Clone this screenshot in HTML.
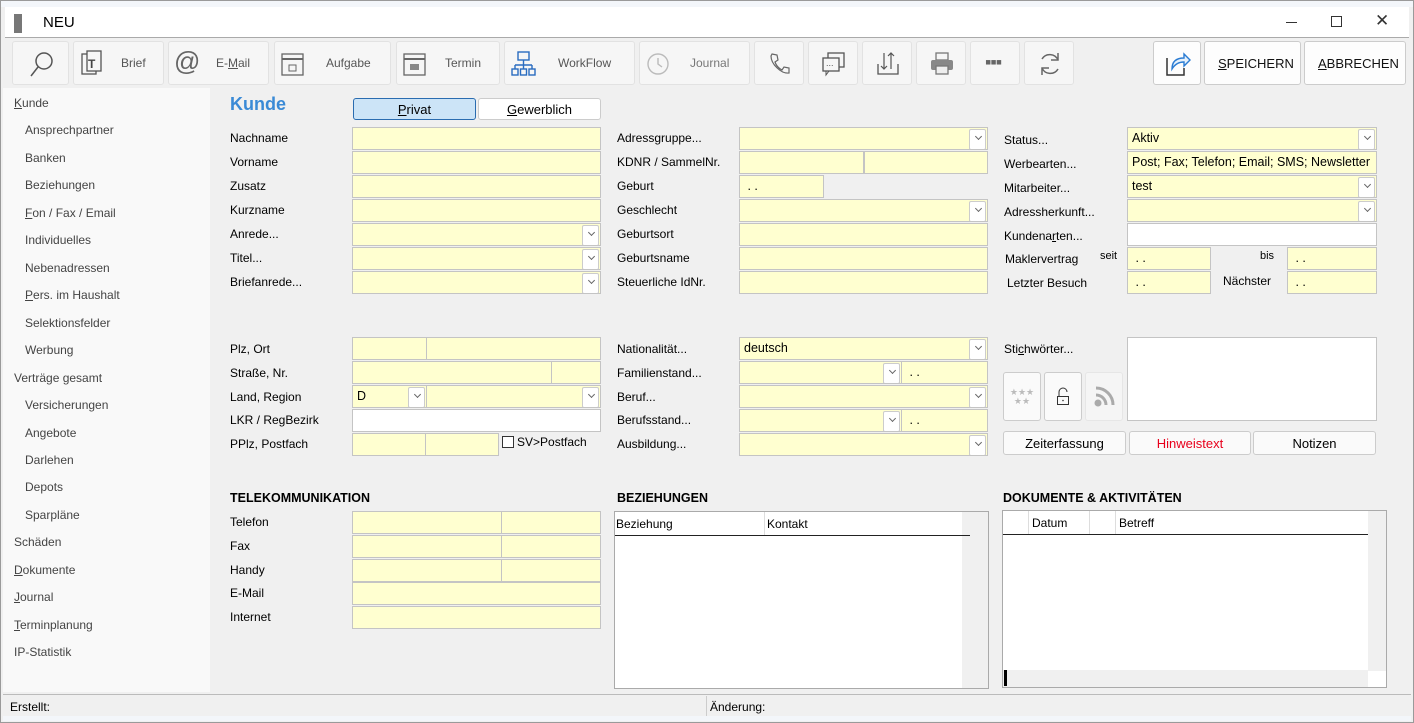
<!DOCTYPE html>
<html><head><meta charset="utf-8"><style>
*{box-sizing:border-box;margin:0;padding:0}
body{width:1414px;height:723px;background:#f0f0f0;font-family:"Liberation Sans",sans-serif;font-size:12px;color:#000;position:relative;overflow:hidden}
.a{position:absolute}
.f{position:absolute;height:23px;background:#ffffd0;border:1px solid #c4c4c4;padding:3px 4px;font-size:12.5px;white-space:nowrap;overflow:hidden}
.w{background:#fff}
.dd::after{content:"";position:absolute;right:1px;top:1px;width:15px;height:19px;background:#fff;border:1px solid #ccc;border-radius:2px}
.dd::before{content:"";position:absolute;right:6px;top:6px;width:4px;height:4px;border-right:1px solid #666;border-bottom:1px solid #666;transform:rotate(45deg);z-index:2}
.l{position:absolute;font-size:12px;white-space:nowrap}
.tb{position:absolute;top:41px;height:44px;background:#f6f6f6;border:1px solid #e2e2e2;border-radius:3px;color:#555;font-size:12px}
.tb span{position:absolute;top:14px}
.tb svg{position:absolute}
.nav{position:absolute;left:14px;font-size:12px;color:#444}
.nav.i{left:25px}
.btn{position:absolute;background:#fafafa;border:1px solid #ccc;border-radius:3px;text-align:center;font-size:13px}
h3{position:absolute;font-size:12.5px;font-weight:bold}
</style></head><body>
<!-- title bar -->
<div class="a" style="left:0;top:0;width:1414px;height:723px;border:1px solid #9a9a9a"></div>
<div class="a" style="left:1px;top:1px;width:1412px;height:6px;background:#f3f6fa"></div>
<div class="a" style="left:5px;top:7px;width:1404px;height:31px;background:#fff;border-bottom:1px solid #aaa"></div>
<div class="a" style="left:14px;top:14px;width:8px;height:19px;background:#777"></div>
<div class="l" style="left:43px;top:14px;font-size:15px">NEU</div>
<div class="a" style="left:1286px;top:22px;width:11px;height:1px;background:#333"></div>
<div class="a" style="left:1331px;top:16px;width:11px;height:11px;border:1px solid #333"></div>
<div class="l" style="left:1375px;top:11px;font-size:17px;color:#333">✕</div>
<!-- toolbar -->
<div class="tb" style="left:12px;width:57px"><svg style="left:16px;top:8px" width="26" height="28" viewBox="0 0 26 28"><circle cx="15" cy="11" r="8" fill="none" stroke="#555" stroke-width="1.5"/><line x1="9" y1="17" x2="2" y2="26" stroke="#555" stroke-width="1.5"/></svg></div>
<div class="tb" style="left:73px;width:91px"><svg style="left:6px;top:8px" width="24" height="28"><rect x="2" y="4" width="14" height="20" fill="none" stroke="#555" stroke-width="1.3"/><rect x="7" y="1" width="14" height="20" fill="#f6f6f6" stroke="#555" stroke-width="1.3"/><text x="8" y="18" font-size="12" font-weight="bold" fill="#444" font-family="Liberation Sans">T</text></svg><span style="left:47px">Brief</span></div>
<div class="tb" style="left:168px;width:101px"><span style="left:5px;top:4px;font-size:26px;color:#666">@</span><span style="left:47px">E-<u>M</u>ail</span></div>
<div class="tb" style="left:274px;width:117px"><svg style="left:5px;top:9px" width="26" height="26"><rect x="2" y="3" width="21" height="21" fill="none" stroke="#666" stroke-width="1.3"/><line x1="2" y1="8" x2="23" y2="8" stroke="#666" stroke-width="2"/><rect x="9" y="14" width="7" height="6" fill="none" stroke="#666"/></svg><span style="left:51px">Aufgabe</span></div>
<div class="tb" style="left:396px;width:104px"><svg style="left:5px;top:9px" width="26" height="26"><rect x="2" y="3" width="21" height="21" fill="none" stroke="#666" stroke-width="1.3"/><line x1="2" y1="8" x2="23" y2="8" stroke="#666" stroke-width="2"/><rect x="8" y="13" width="9" height="6" fill="#888"/></svg><span style="left:48px">Termin</span></div>
<div class="tb" style="left:504px;width:131px"><svg style="left:6px;top:8px" width="26" height="28"><g fill="none" stroke="#2a6cc0" stroke-width="1.4"><rect x="7" y="2" width="11" height="8"/><line x1="12.5" y1="10" x2="12.5" y2="15"/><line x1="4" y1="15" x2="21" y2="15"/><line x1="4" y1="15" x2="4" y2="19"/><line x1="12.5" y1="15" x2="12.5" y2="19"/><line x1="21" y1="15" x2="21" y2="19"/><rect x="1" y="19" width="6" height="6"/><rect x="9.5" y="19" width="6" height="6"/><rect x="18" y="19" width="6" height="6"/></g></svg><span style="left:53px">WorkFlow</span></div>
<div class="tb" style="left:639px;width:111px"><svg style="left:5px;top:9px" width="26" height="26"><circle cx="13" cy="13" r="10" fill="none" stroke="#bbb" stroke-width="1.4"/><path d="M13 7v6l4 3" fill="none" stroke="#bbb" stroke-width="1.4"/></svg><span style="left:50px;color:#777">Journal</span></div>
<div class="tb" style="left:754px;width:50px"><svg style="left:12px;top:9px" width="26" height="26"><path d="M5 3l5 1 1 5-3 2c1 3 3 6 7 8l2-3 5 1 0 5c-8 1-18-9-18-17z" fill="none" stroke="#666" stroke-width="1.2"/></svg></div>
<div class="tb" style="left:808px;width:50px"><svg style="left:12px;top:9px" width="26" height="26"><rect x="7" y="2" width="16" height="14" fill="none" stroke="#555" stroke-width="1.3"/><rect x="2" y="7" width="16" height="13" fill="#f6f6f6" stroke="#555" stroke-width="1.3"/><path d="M5 20v4l3-4" fill="none" stroke="#555"/><text x="5" y="15" font-size="9" fill="#555">...</text></svg></div>
<div class="tb" style="left:862px;width:50px"><svg style="left:12px;top:8px" width="26" height="28"><path d="M3 14v10h20V14" fill="none" stroke="#555" stroke-width="1.3"/><path d="M9 3v16M6 16l3 3 3-3M16 19V3M13 6l3-3 3 3" fill="none" stroke="#555" stroke-width="1.2"/></svg></div>
<div class="tb" style="left:916px;width:50px"><svg style="left:12px;top:9px" width="26" height="26"><rect x="7" y="2" width="12" height="7" fill="none" stroke="#777" stroke-width="1.3"/><rect x="2" y="9" width="22" height="10" rx="2" fill="#888"/><rect x="7" y="15" width="12" height="8" fill="#eee" stroke="#777" stroke-width="1.3"/></svg></div>
<div class="tb" style="left:970px;width:50px"><span style="left:14px;top:10px;font-size:18px;color:#666;letter-spacing:-1px">▪▪▪</span></div>
<div class="tb" style="left:1024px;width:50px"><svg style="left:11px;top:8px" width="28" height="28"><path d="M22 10A9 9 0 0 0 6 9M6 18a9 9 0 0 0 16 1" fill="none" stroke="#666" stroke-width="1.5"/><path d="M22 3v7h-7M6 25v-7h7" fill="none" stroke="#666" stroke-width="1.5"/></svg></div>
<div class="tb" style="left:1153px;width:48px;background:#fdfdfd;border-color:#ccc"><svg style="left:10px;top:8px" width="28" height="28"><path d="M3 8v17h17V18" fill="none" stroke="#333" stroke-width="1.5"/><path d="M8 19c0-8 5-11 12-11V4l6 6-6 6v-4c-5 0-9 2-12 7z" fill="#e6f1fb" stroke="#2b7cd3" stroke-width="1.4"/></svg></div>
<div class="tb" style="left:1204px;width:97px;background:#fdfdfd;border-color:#ccc;color:#111;font-size:13px"><span style="left:13px"><u>S</u>PEICHERN</span></div>
<div class="tb" style="left:1304px;width:102px;background:#fdfdfd;border-color:#ccc;color:#111;font-size:13px"><span style="left:13px"><u>A</u>BBRECHEN</span></div>
<!-- sidebar -->
<div class="a" style="left:3px;top:88px;width:207px;height:604px;background:#f9f9f9"></div>
<div class="nav" style="top:96px"><u>K</u>unde</div>
<div class="nav i" style="top:123px">Ansprechpartner</div>
<div class="nav i" style="top:151px">Banken</div>
<div class="nav i" style="top:178px">Beziehungen</div>
<div class="nav i" style="top:206px"><u>F</u>on / Fax / Email</div>
<div class="nav i" style="top:233px">Individuelles</div>
<div class="nav i" style="top:261px">Nebenadressen</div>
<div class="nav i" style="top:288px"><u>P</u>ers. im Haushalt</div>
<div class="nav i" style="top:316px">Selektionsfelder</div>
<div class="nav i" style="top:343px">Werbung</div>
<div class="nav" style="top:371px">Verträge gesamt</div>
<div class="nav i" style="top:398px">Versicherungen</div>
<div class="nav i" style="top:426px">Angebote</div>
<div class="nav i" style="top:453px">Darlehen</div>
<div class="nav i" style="top:480px">Depots</div>
<div class="nav i" style="top:508px">Sparpläne</div>
<div class="nav" style="top:535px">Schäden</div>
<div class="nav" style="top:563px"><u>D</u>okumente</div>
<div class="nav" style="top:590px"><u>J</u>ournal</div>
<div class="nav" style="top:618px"><u>T</u>erminplanung</div>
<div class="nav" style="top:645px">IP-Statistik</div>
<!-- header -->
<div class="l" style="left:230px;top:94px;font-size:18px;font-weight:bold;color:#3a8ad6">Kunde</div>
<div class="btn" style="left:353px;top:98px;width:123px;height:22px;background:#cce4f7;border-color:#2a6cb0;padding-top:3px"><u>P</u>rivat</div>
<div class="btn" style="left:478px;top:98px;width:123px;height:22px;background:#fff;padding-top:3px"><u>G</u>ewerblich</div>
<!-- col1 -->
<div class="l" style="left:230px;top:131px">Nachname</div><div class="f" style="left:352px;top:127px;width:249px"></div>
<div class="l" style="left:230px;top:155px">Vorname</div><div class="f" style="left:352px;top:151px;width:249px"></div>
<div class="l" style="left:230px;top:179px">Zusatz</div><div class="f" style="left:352px;top:175px;width:249px"></div>
<div class="l" style="left:230px;top:203px">Kurzname</div><div class="f" style="left:352px;top:199px;width:249px"></div>
<div class="l" style="left:230px;top:227px">Anrede...</div><div class="f dd" style="left:352px;top:223px;width:249px"></div>
<div class="l" style="left:230px;top:251px">Titel...</div><div class="f dd" style="left:352px;top:247px;width:249px"></div>
<div class="l" style="left:230px;top:275px">Briefanrede...</div><div class="f dd" style="left:352px;top:271px;width:249px"></div>
<!-- col2 -->
<div class="l" style="left:617px;top:131px">Adressgruppe...</div><div class="f dd" style="left:739px;top:127px;width:249px"></div>
<div class="l" style="left:617px;top:155px">KDNR / SammelNr.</div><div class="f" style="left:739px;top:151px;width:125px"></div><div class="f" style="left:864px;top:151px;width:124px"></div>
<div class="l" style="left:617px;top:179px">Geburt</div><div class="f" style="left:739px;top:175px;width:85px">&nbsp;. .</div>
<div class="l" style="left:617px;top:203px">Geschlecht</div><div class="f dd" style="left:739px;top:199px;width:249px"></div>
<div class="l" style="left:617px;top:227px">Geburtsort</div><div class="f" style="left:739px;top:223px;width:249px"></div>
<div class="l" style="left:617px;top:251px">Geburtsname</div><div class="f" style="left:739px;top:247px;width:249px"></div>
<div class="l" style="left:617px;top:275px">Steuerliche IdNr.</div><div class="f" style="left:739px;top:271px;width:249px"></div>
<!-- col3 -->
<div class="l" style="left:1004px;top:133px">Status...</div><div class="f dd" style="left:1127px;top:127px;width:250px">Aktiv</div>
<div class="l" style="left:1004px;top:157px">Werbearten...</div><div class="f" style="left:1127px;top:151px;width:250px">Post; Fax; Telefon; Email; SMS; Newsletter</div>
<div class="l" style="left:1004px;top:181px">Mitarbeiter...</div><div class="f dd" style="left:1127px;top:175px;width:250px">test</div>
<div class="l" style="left:1004px;top:205px">Adressherkunft...</div><div class="f dd" style="left:1127px;top:199px;width:250px"></div>
<div class="l" style="left:1004px;top:229px">Kundena<u>r</u>ten...</div><div class="f w" style="left:1127px;top:223px;width:250px"></div>
<div class="l" style="left:1005px;top:252px">Maklervertrag</div><div class="l" style="left:1100px;top:250px;font-size:11px">seit</div><div class="f" style="left:1127px;top:247px;width:84px">&nbsp;. .</div><div class="l" style="left:1260px;top:250px;font-size:11px">bis</div><div class="f" style="left:1287px;top:247px;width:90px">&nbsp;. .</div>
<div class="l" style="left:1007px;top:276px">Letzter Besuch</div><div class="f" style="left:1127px;top:271px;width:84px">&nbsp;. .</div><div class="l" style="left:1223px;top:274px">Nächster</div><div class="f" style="left:1287px;top:271px;width:90px">&nbsp;. .</div>
<!-- section 2 -->
<div class="l" style="left:230px;top:342px">Plz, Ort</div><div class="f" style="left:352px;top:337px;width:75px"></div><div class="f" style="left:426px;top:337px;width:175px"></div>
<div class="l" style="left:230px;top:366px">Straße, Nr.</div><div class="f" style="left:352px;top:361px;width:200px"></div><div class="f" style="left:551px;top:361px;width:50px"></div>
<div class="l" style="left:230px;top:390px">Land, Region</div><div class="f dd" style="left:352px;top:385px;width:75px">D</div><div class="f dd" style="left:426px;top:385px;width:175px"></div>
<div class="l" style="left:230px;top:413px">LKR / RegBezirk</div><div class="f w" style="left:352px;top:409px;width:249px"></div>
<div class="l" style="left:230px;top:437px">PPlz, Postfach</div><div class="f" style="left:352px;top:433px;width:74px"></div><div class="f" style="left:425px;top:433px;width:74px"></div>
<div class="a" style="left:502px;top:436px;width:12px;height:12px;border:1px solid #333;background:#fff"></div><div class="l" style="left:517px;top:435px">SV&gt;Postfach</div>
<div class="l" style="left:617px;top:342px">Nationalität...</div><div class="f dd" style="left:739px;top:337px;width:249px">deutsch</div>
<div class="l" style="left:617px;top:366px">Familienstand...</div><div class="f dd" style="left:739px;top:361px;width:163px"></div><div class="f" style="left:901px;top:361px;width:87px">&nbsp;. .</div>
<div class="l" style="left:617px;top:390px">Beruf...</div><div class="f dd" style="left:739px;top:385px;width:249px"></div>
<div class="l" style="left:617px;top:413px">Berufsstand...</div><div class="f dd" style="left:739px;top:409px;width:163px"></div><div class="f" style="left:901px;top:409px;width:87px">&nbsp;. .</div>
<div class="l" style="left:617px;top:437px">Ausbildung...</div><div class="f dd" style="left:739px;top:433px;width:249px"></div>
<div class="l" style="left:1004px;top:342px">Sti<u>c</u>hwörter...</div>
<div class="a" style="left:1127px;top:337px;width:250px;height:84px;background:#fff;border:1px solid #c4c4c4"></div>
<div class="btn" style="left:1003px;top:372px;width:38px;height:49px;color:#bbb;font-size:9px;line-height:9px;padding-top:15px">★★★<br>★★</div>
<div class="btn" style="left:1044px;top:372px;width:38px;height:49px"><svg style="margin-top:14px" width="16" height="20"><path d="M4 9V5a4 4 0 0 1 8 0" fill="none" stroke="#333"/><rect x="2.5" y="9.5" width="11" height="8" fill="none" stroke="#333"/><circle cx="8" cy="13.5" r="0.8" fill="#333"/></svg></div>
<div class="btn" style="left:1085px;top:372px;width:38px;height:49px;background:#f5f5f5;border-color:#e6e6e6"><svg style="margin-top:12px" width="24" height="24"><circle cx="6" cy="18" r="3.5" fill="#aaa"/><path d="M4 10a10 10 0 0 1 10 10M4 3a17 17 0 0 1 17 17" fill="none" stroke="#aaa" stroke-width="3"/></svg></div>
<div class="btn" style="left:1003px;top:431px;width:123px;height:24px;padding-top:4px">Zeiterfassung</div>
<div class="btn" style="left:1129px;top:431px;width:122px;height:24px;padding-top:4px;color:#e8001c">Hinweistext</div>
<div class="btn" style="left:1253px;top:431px;width:123px;height:24px;padding-top:4px">Notizen</div>
<!-- section 3 -->
<h3 style="left:230px;top:491px">TELEKOMMUNIKATION</h3>
<h3 style="left:617px;top:491px">BEZIEHUNGEN</h3>
<h3 style="left:1003px;top:491px">DOKUMENTE &amp; AKTIVITÄTEN</h3>
<div class="l" style="left:230px;top:515px">Telefon</div><div class="f" style="left:352px;top:511px;width:150px"></div><div class="f" style="left:501px;top:511px;width:100px"></div>
<div class="l" style="left:230px;top:539px">Fax</div><div class="f" style="left:352px;top:535px;width:150px"></div><div class="f" style="left:501px;top:535px;width:100px"></div>
<div class="l" style="left:230px;top:563px">Handy</div><div class="f" style="left:352px;top:559px;width:150px"></div><div class="f" style="left:501px;top:559px;width:100px"></div>
<div class="l" style="left:230px;top:586px">E-Mail</div><div class="f" style="left:352px;top:582px;width:249px"></div>
<div class="l" style="left:230px;top:610px">Internet</div><div class="f" style="left:352px;top:606px;width:249px"></div>
<!-- Beziehungen table -->
<div class="a" style="left:614px;top:511px;width:375px;height:178px;background:#fff;border:1px solid #aaa"></div>
<div class="a" style="left:962px;top:512px;width:26px;height:176px;background:#f0f0f0"></div>
<div class="a" style="left:615px;top:535px;width:355px;height:1px;background:#222"></div>
<div class="a" style="left:764px;top:512px;width:1px;height:23px;background:#ddd"></div>
<div class="l" style="left:616px;top:517px">Beziehung</div><div class="l" style="left:767px;top:517px">Kontakt</div>
<!-- Dokumente table -->
<div class="a" style="left:1002px;top:510px;width:385px;height:178px;background:#fff;border:1px solid #aaa"></div>
<div class="a" style="left:1368px;top:511px;width:18px;height:160px;background:#f0f0f0"></div>
<div class="a" style="left:1003px;top:670px;width:365px;height:17px;background:#f0f0f0"></div>
<div class="a" style="left:1004px;top:670px;width:3px;height:16px;background:#000"></div>
<div class="a" style="left:1003px;top:534px;width:365px;height:1px;background:#222"></div>
<div class="a" style="left:1028px;top:511px;width:1px;height:23px;background:#ddd"></div>
<div class="a" style="left:1089px;top:511px;width:1px;height:23px;background:#ddd"></div>
<div class="a" style="left:1115px;top:511px;width:1px;height:23px;background:#ddd"></div>
<div class="l" style="left:1032px;top:516px">Datum</div><div class="l" style="left:1119px;top:516px">Betreff</div>
<!-- status bar -->
<div class="a" style="left:3px;top:694px;width:1408px;height:1px;background:#bbb"></div>
<div class="a" style="left:706px;top:696px;width:1px;height:20px;background:#ccc"></div>
<div class="l" style="left:10px;top:700px">Erstellt:</div>
<div class="l" style="left:710px;top:700px">Änderung:</div>
<div class="a" style="left:3px;top:716px;width:1408px;height:5px;background:#f3f6fa"></div>
</body></html>
